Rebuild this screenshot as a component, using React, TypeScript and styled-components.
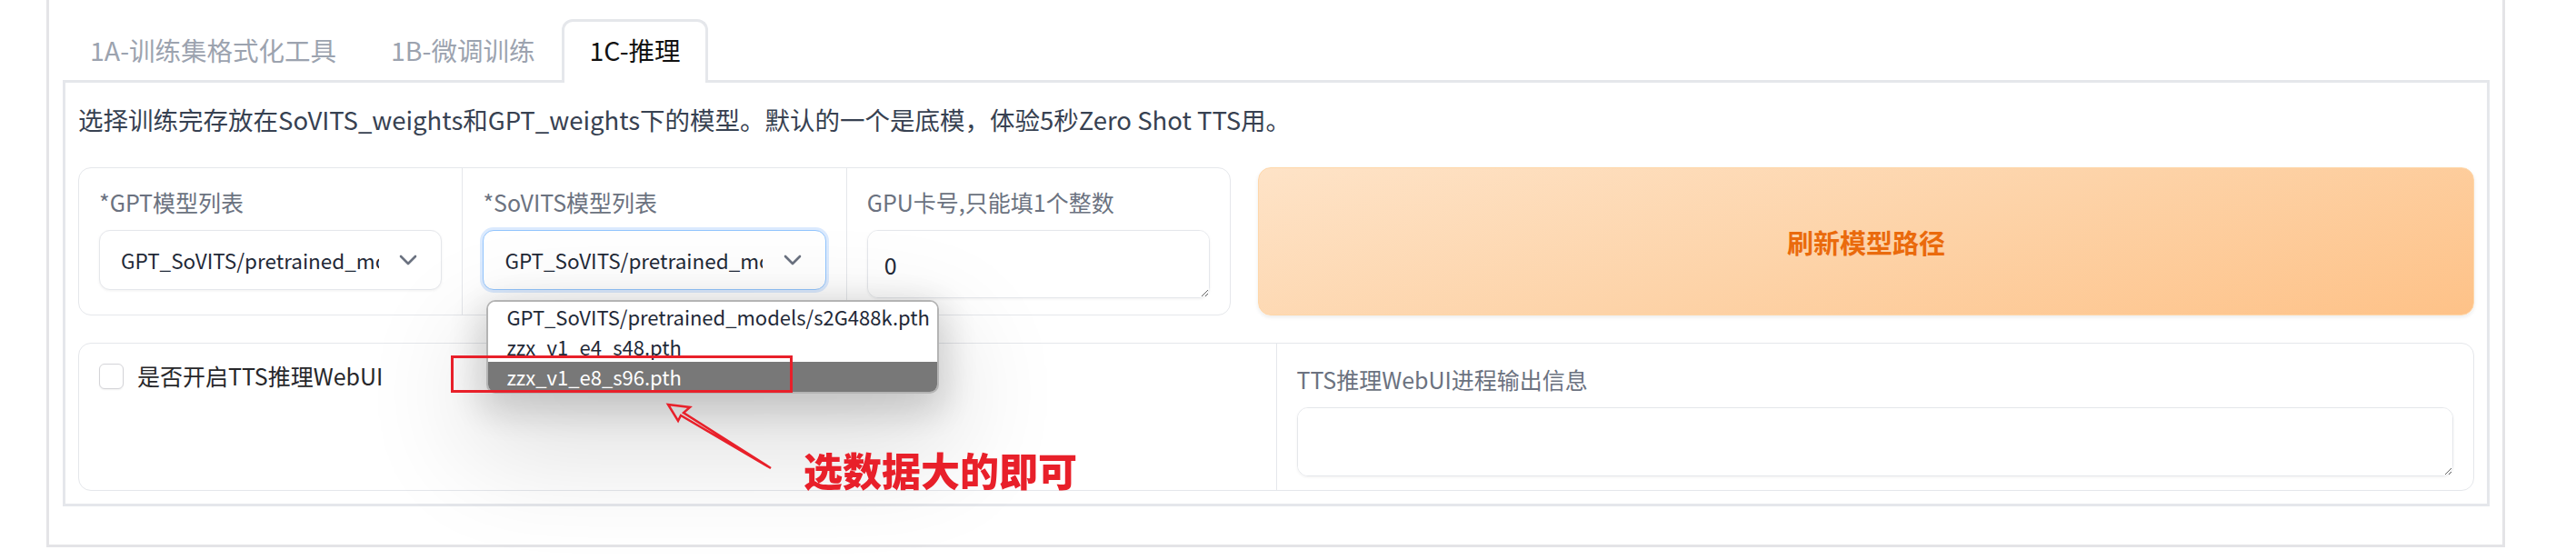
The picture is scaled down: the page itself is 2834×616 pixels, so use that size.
import React from 'react';
import styled, {createGlobalStyle} from 'styled-components';

const GlobalStyle = createGlobalStyle`
  html, body {
    margin: 0;
    padding: 0;
    background: #ffffff;
  }
  body {
    font-family: "Noto Sans CJK SC", "Noto Sans", sans-serif;
    color: #374151;
  }
  * { box-sizing: border-box; }
`;

const Page = styled.div`
  position: relative;
  width: 2834px;
  height: 616px;
  overflow: hidden;
`;

const Outer = styled.div`
  margin-left: 51px;
  width: 2705px;
  border: 3px solid #e4e4e7;
  border-top: none;
  padding: 0 14px 42px 15px;
`;

const TabNav = styled.div`
  display: flex;
  padding-top: 21px;
`;

const Tab = styled.div<{ $active?: boolean }>`
  position: relative;
  z-index: 1;
  height: 70px;
  margin-bottom: -3px;
  padding: 11px 27px 0;
  border: 3px solid ${p => (p.$active ? '#e5e7eb' : 'transparent')};
  border-bottom: none;
  border-radius: 12px 12px 0 0;
  background: ${p => (p.$active ? '#ffffff' : 'transparent')};
  color: ${p => (p.$active ? '#111111' : '#9ca3af')};
  font-size: 28.5px;
  line-height: 40px;
  white-space: nowrap;
`;

const Panel = styled.div`
  border: 3px solid #e5e7eb;
  padding: 20px 14px 14px;
`;

const Description = styled.div`
  font-size: 27.5px;
  line-height: 40px;
  color: #374151;
  white-space: nowrap;
`;

const TopRow = styled.div`
  display: flex;
  gap: 30px;
  margin-top: 33px;
  height: 163px;
`;

const Group = styled.div<{ $grow: number }>`
  flex: ${p => p.$grow} 1 0;
  display: flex;
  border: 1px solid #e5e7eb;
  border-radius: 14px;
  background: #ffffff;
`;

const Block = styled.div<{ $pt?: number }>`
  position: relative;
  flex: 1 1 0;
  min-width: 0;
  padding: ${p => p.$pt ?? 19}px 22px 0;
  & + & {
    border-left: 1px solid #e5e7eb;
  }
`;

const Label = styled.div`
  font-size: 25px;
  line-height: 37px;
  color: #6b7280;
  margin-bottom: 12px;
  white-space: nowrap;
`;

const SelectBox = styled.div<{ $focused?: boolean }>`
  position: relative;
  display: flex;
  align-items: center;
  height: 66px;
  padding: 0 18px 0 23px;
  border: 1.5px solid ${p => (p.$focused ? '#93c5fd' : '#e5e7eb')};
  border-radius: 12px;
  background: #ffffff;
  box-shadow: ${p => (p.$focused ? '0 0 0 3px #dbeafe' : '0 1px 3px rgba(0,0,0,0.06)')};
`;

const SelectValue = styled.div`
  width: 284px;
  overflow: hidden;
  white-space: nowrap;
  font-size: 22.5px;
  color: #1f2937;
`;

const Chevron = styled.svg`
  margin-left: auto;
  margin-right: 8px;
`;

const TextArea = styled.textarea<{ $h: number }>`
  display: block;
  width: 100%;
  height: ${p => p.$h}px;
  padding: 19px 18px;
  border: 1.5px solid #e5e7eb;
  border-radius: 12px;
  font-family: "Noto Sans CJK SC", "Noto Sans", sans-serif;
  font-size: 25px;
  line-height: 37px;
  color: #1f2937;
  background: #ffffff;
  box-shadow: 0 1px 3px rgba(0,0,0,0.06);
  outline: none;
`;

const RefreshButton = styled.button`
  flex: 1332 1 0;
  border: 1px solid #fed7aa;
  border-radius: 14px;
  background: linear-gradient(165deg, #fee3c7 0%, #fdd3a8 50%, #fec288 100%);
  box-shadow: 0 2px 4px rgba(0,0,0,0.08);
  color: #ea6a0c;
  font-family: "Noto Sans CJK SC", "Noto Sans", sans-serif;
  font-size: 29px;
  font-weight: 700;
`;

const BottomRow = styled.div`
  display: flex;
  margin-top: 30px;
  height: 163px;
  border: 1px solid #e5e7eb;
  border-radius: 14px;
`;

const CheckRow = styled.label`
  display: flex;
  align-items: center;
  gap: 15px;
  font-size: 25px;
  line-height: 37px;
  color: #27272a;
`;

const CheckBox = styled.span`
  display: inline-block;
  width: 27px;
  height: 28px;
  border: 1.5px solid #d4d4d8;
  border-radius: 6px;
  background: #ffffff;
  box-shadow: 0 1px 2px rgba(0,0,0,0.06);
`;

const Menu = styled.div`
  position: absolute;
  z-index: 5;
  left: 3px;
  top: 76px;
  width: 498px;
  border: 2px solid #b4b4b4;
  border-radius: 10px;
  background: #ffffff;
  overflow: hidden;
  box-shadow: 0 12px 40px 8px rgba(0,0,0,0.16), 0 50px 120px 20px rgba(0,0,0,0.12);
`;

const MenuItem = styled.div<{ $active?: boolean }>`
  height: 33px;
  padding-left: 20px;
  font-size: 22px;
  line-height: 33px;
  white-space: nowrap;
  color: ${p => (p.$active ? '#ffffff' : '#1f2937')};
  background: ${p => (p.$active ? '#787878' : '#ffffff')};
`;

const RedBox = styled.div`
  position: absolute;
  z-index: 6;
  left: 496px;
  top: 391px;
  width: 376px;
  height: 41px;
  border: 3px solid #e8202a;
`;

const Arrow = styled.svg`
  position: absolute;
  z-index: 6;
  left: 720px;
  top: 430px;
`;

const Note = styled.div`
  position: absolute;
  z-index: 6;
  left: 884px;
  top: 488px;
  font-size: 43px;
  line-height: 56px;
  font-weight: 900;
  color: #e8202a;
  white-space: nowrap;
`;

const options = [
    'GPT_SoVITS/pretrained_models/s2G488k.pth',
    'zzx_v1_e4_s48.pth',
    'zzx_v1_e8_s96.pth',
];

const ChevronIcon = () => (
    <Chevron width="20" height="12" viewBox="0 0 20 12">
        <path d="M2 2 L10 10 L18 2" fill="none" stroke="#6b7280" strokeWidth="2.6" strokeLinecap="round"
              strokeLinejoin="round"/>
    </Chevron>
);

function App() {
    return (
        <Page>
            <GlobalStyle/>
            <Outer>
                <TabNav>
                    <Tab>1A-训练集格式化工具</Tab>
                    <Tab>1B-微调训练</Tab>
                    <Tab $active>1C-推理</Tab>
                </TabNav>
                <Panel>
                    <Description>
                        选择训练完存放在SoVITS_weights和GPT_weights下的模型。默认的一个是底模，体验5秒Zero Shot TTS用。
                    </Description>
                    <TopRow>
                        <Group $grow={1274}>
                            <Block>
                                <Label>*GPT模型列表</Label>
                                <SelectBox>
                                    <SelectValue>GPT_SoVITS/pretrained_models/s2G488k.pth</SelectValue>
                                    <ChevronIcon/>
                                </SelectBox>
                            </Block>
                            <Block>
                                <Label>*SoVITS模型列表</Label>
                                <SelectBox $focused>
                                    <SelectValue>GPT_SoVITS/pretrained_models/s2G488k.pth</SelectValue>
                                    <ChevronIcon/>
                                    <Menu>
                                        {options.map((o, i) => (
                                            <MenuItem key={o} $active={i === 2}>{o}</MenuItem>
                                        ))}
                                    </Menu>
                                </SelectBox>
                            </Block>
                            <Block>
                                <Label>GPU卡号,只能填1个整数</Label>
                                <TextArea $h={75} defaultValue="0"/>
                            </Block>
                        </Group>
                        <RefreshButton>刷新模型路径</RefreshButton>
                    </TopRow>
                    <BottomRow>
                        <Block $pt={17}>
                            <CheckRow>
                                <CheckBox/>
                                是否开启TTS推理WebUI
                            </CheckRow>
                        </Block>
                        <Block $pt={21}>
                            <Label>TTS推理WebUI进程输出信息</Label>
                            <TextArea $h={76} defaultValue=""/>
                        </Block>
                    </BottomRow>
                </Panel>
            </Outer>
            <RedBox/>
            <Arrow width="140" height="100" viewBox="720 430 140 100">
                <polygon points="735,445 759,448 752,454 848,515 749,457 746,463" fill="none"
                         stroke="#e8202a" strokeWidth="2.5" strokeLinejoin="miter"/>
            </Arrow>
            <Note>选数据大的即可</Note>
        </Page>
    );
}

export default App;
